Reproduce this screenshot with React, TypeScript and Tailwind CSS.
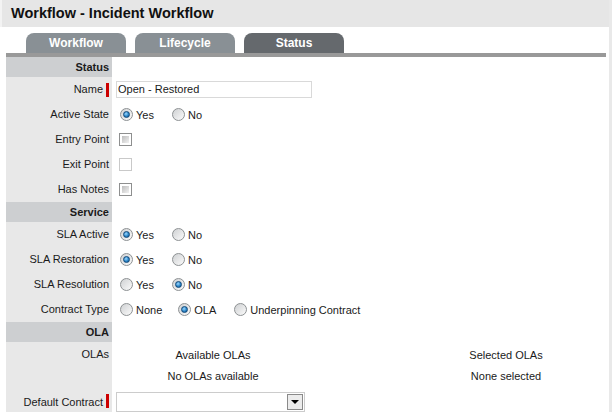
import React from "react"

const font = "font-['Liberation_Sans',Arial,sans-serif]"

function Radio({ checked }: { checked?: boolean }) {
  return (
    <span className="relative inline-block w-[13px] h-[13px] shrink-0 rounded-full border border-[#8d9193] bg-gradient-to-br from-[#cfd1d3] to-[#fbfbfb]">
      {checked && (
        <span className="absolute left-[2px] top-[2px] w-[7px] h-[7px] rounded-full border border-[#10487a] bg-[radial-gradient(circle_at_40%_35%,#9fd8ff,#2a86c8_55%,#124f86)]" />
      )}
    </span>
  )
}

function Check({ disabled }: { disabled?: boolean }) {
  return (
    <span
      className={`inline-block w-[13px] h-[13px] shrink-0 border bg-white p-[2px] ${disabled ? "border-[#c9c9c9]" : "border-[#8e8f8f]"}`}
    >
      {!disabled && <span className="block w-full h-full bg-gradient-to-br from-[#bdbdbd] to-[#f2f2f2]" />}
    </span>
  )
}

function Option({ label, checked, gap = "mr-[18px]" }: { label: string; checked?: boolean; gap?: string }) {
  return (
    <span className={`flex items-center ${gap}`}>
      <Radio checked={checked} />
      <span className="ml-[3px] mt-[2px]">{label}</span>
    </span>
  )
}

function Header({ title }: { title: string }) {
  return (
    <div className="flex h-[20px]">
      <div className="w-[106px] bg-[#cdcfd1] flex items-center justify-end pr-[3px] font-bold">{title}</div>
      <div className="flex-1" />
    </div>
  )
}

function Row({ label, required, children, h = "h-[25px]" }: { label: string; required?: boolean; children?: React.ReactNode; h?: string }) {
  return (
    <div className={`flex ${h}`}>
      <div className="w-[106px] bg-[#e8e8e8] flex items-center justify-end pr-[3px]">
        <span>{label}</span>
        {required && <span className="ml-[3px] w-[3px] h-[14px] bg-[#cc0000]" />}
      </div>
      <div className="flex-1 flex items-center pl-[8px]">{children}</div>
    </div>
  )
}

export default function App() {
  const tabs = ["Workflow", "Lifecycle", "Status"]
  return (
    <div className={`w-[612px] h-[412px] overflow-hidden bg-white flex items-start text-[11px] text-[#1a1a1a] ${font}`}>
      <div className="w-[609px] shrink-0">
        {/* Title */}
        <div className="h-[27px] bg-[#e6e6e6] border-l-2 border-[#f3f3f3] flex items-center pl-[9px]">
          <span className="text-[14.5px] font-bold text-[#111]">Workflow - Incident Workflow</span>
        </div>

        {/* Tabs */}
        <div className="flex gap-[9px] pl-[26px] pt-[6px]">
          {tabs.map((t) => (
            <div
              key={t}
              className={`w-[100px] h-[20px] rounded-t-[8px] flex items-center justify-center text-white font-bold text-[12px] ${t === "Status" ? "bg-[#65696d]" : "bg-[#899095]"}`}
            >
              {t}
            </div>
          ))}
        </div>
        <div className="ml-[6px] w-[600px] h-[4px] bg-[#999999]" />

        {/* Form */}
        <div className="ml-[6px] w-[600px]">
          <Header title="Status" />
          <Row label="Name" required>
            <div className="ml-[-4px] w-[196px] h-[17px] border border-[#d9d9d9] flex items-center pl-[1px] text-[11px]">
              Open - Restored
            </div>
          </Row>
          <Row label="Active State">
            <Option label="Yes" checked />
            <Option label="No" />
          </Row>
          <Row label="Entry Point">
            <span className="-ml-px flex"><Check /></span>
          </Row>
          <Row label="Exit Point">
            <span className="-ml-px flex"><Check disabled /></span>
          </Row>
          <Row label="Has Notes">
            <span className="-ml-px flex"><Check /></span>
          </Row>
          <Header title="Service" />
          <Row label="SLA Active">
            <Option label="Yes" checked />
            <Option label="No" />
          </Row>
          <Row label="SLA Restoration">
            <Option label="Yes" checked />
            <Option label="No" />
          </Row>
          <Row label="SLA Resolution">
            <Option label="Yes" />
            <Option label="No" checked />
          </Row>
          <Row label="Contract Type">
            <Option label="None" gap="mr-[16px]" />
            <Option label="OLA" checked gap="mr-[18px]" />
            <Option label="Underpinning Contract" />
          </Row>
          <Header title="OLA" />
          <div className="flex h-[47px]">
            <div className="w-[106px] bg-[#e8e8e8] flex justify-end pr-[3px] pt-[4px]">OLAs</div>
            <div className="flex-1 flex">
              <div className="w-[202px] flex flex-col items-center pt-[5px] gap-[4px]">
                <span>Available OLAs</span>
                <span>No OLAs available</span>
              </div>
              <div className="w-[92px]" />
              <div className="w-[200px] flex flex-col items-center pt-[5px] gap-[4px]">
                <span>Selected OLAs</span>
                <span>None selected</span>
              </div>
            </div>
          </div>
          <div className="flex h-[30px]">
            <div className="w-[106px] bg-[#e8e8e8] flex items-start justify-end pr-[3px] pt-[5px]">
              <span>Default Contract</span>
              <span className="ml-[3px] w-[3px] h-[14px] bg-[#cc0000]" />
            </div>
            <div className="flex-1 pl-[4px] pt-[3px]">
              <div className="w-[189px] h-[20px] border border-[#cccccc] flex justify-end items-center pr-[1px]">
                <div className="w-[16px] h-[16px] border border-[#8a8a8a] bg-[#ececec] flex items-center justify-center">
                  <span className="w-0 h-0 border-l-[4px] border-r-[4px] border-t-[4px] border-l-transparent border-r-transparent border-t-black" />
                </div>
              </div>
            </div>
          </div>
        </div>
      </div>
      <div className="w-[3px] h-full bg-[#e9e9e9]" />
    </div>
  )
}
